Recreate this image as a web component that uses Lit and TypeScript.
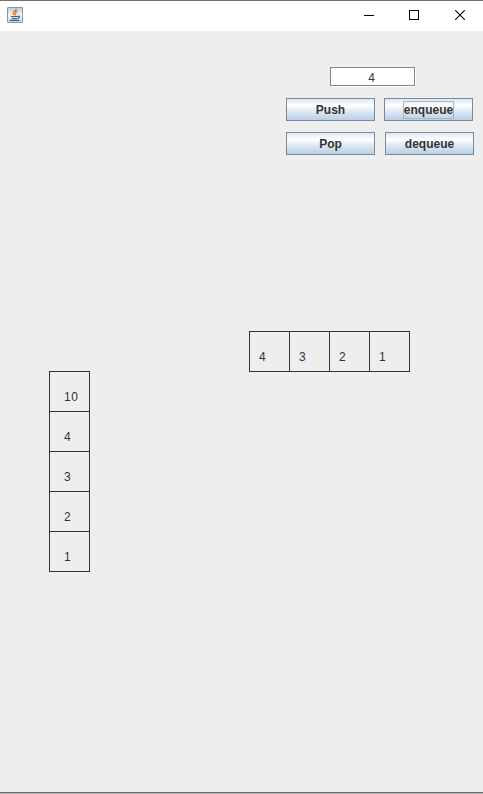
import { LitElement, html, css } from "lit";
import { customElement, property, state } from "lit/decorators.js";

@customElement("title-bar")
class TitleBar extends LitElement {
  static styles = css`
    :host { display: flex; box-sizing: border-box; height: 31px; border-top: 1px solid #707070; background: #fff; align-items: flex-start; }
    .logo { margin: 6px auto 0 7px; }
    .caption { width: 46px; height: 30px; display: flex; justify-content: center; }
    .caption svg { margin-top: 9px; }
    .caption.min { width: 45px; }
    svg { display: block; }
  `;
  render() {
    return html`
      <svg class="logo" width="16" height="16" viewBox="0 0 16 16" fill="none">
        <defs>
          <linearGradient id="g" x1="0" y1="0" x2="0" y2="1">
            <stop offset="0" stop-color="#b9cddb" />
            <stop offset=".5" stop-color="#f1f5f8" />
            <stop offset="1" stop-color="#c6d8e4" />
          </linearGradient>
        </defs>
        <rect x=".5" y=".5" width="15" height="15" rx=".5" fill="url(#g)" stroke="#8199ad" />
        <path d="M9.2 1.6C9.6 3.8 5.8 4.4 6.2 6.2c.2.8 1 1.2 1.2 2M10.6 4C8.4 4.8 8 5.6 8.7 6.6c.4.6.1 1.1-.5 1.6" stroke="#ee7f22" stroke-width="1.5" />
        <path d="M4 9.5h6.8M5 11.5h5.4M10.8 9.3c2-.5 2.3 1.1.2 1.9M2.8 13.4h9.6" stroke="#2d6090" stroke-width="1.2" />
      </svg>
      <div class="caption min">
        <svg width="10" height="10" viewBox="0 0 10 10"><path d="M0 5.5h10" stroke="#000" /></svg>
      </div>
      <div class="caption">
        <svg width="10" height="10" viewBox="0 0 10 10"><rect x=".5" y=".5" width="9" height="9" fill="none" stroke="#000" /></svg>
      </div>
      <div class="caption">
        <svg width="10" height="10" viewBox="0 0 10 10"><path d="M.2.2l9.6 9.6M9.8.2L.2 9.8" stroke="#000" stroke-width="1.1" /></svg>
      </div>
    `;
  }
}

@customElement("metal-button")
class MetalButton extends LitElement {
  @property() label = "";
  @property({ type: Boolean }) focused = false;
  static styles = css`
    :host { display: block; }
    button {
      display: flex; align-items: center; justify-content: center; box-sizing: border-box;
      width: 89px; height: 23px; padding: 0; margin: 0; border: 1px solid #7a8a99; border-radius: 0;
      background: linear-gradient(#dde8f3 0, #ffffff 30%, #dde8f3 60%, #b8cfe5 100%);
      font: bold 12px/16px "Liberation Sans", Arial, sans-serif; color: #333;
    }
    span { border: 1px solid transparent; height: 16px; }
    .focused { border-color: #a3b8cc; }
  `;
  render() {
    return html`<button><span class=${this.focused ? "focused" : ""}>${this.label}</span></button>`;
  }
}

@customElement("app-root")
class AppRoot extends LitElement {
  @state() stack = [10, 4, 3, 2, 1];
  @state() queue = [4, 3, 2, 1];
  static styles = css`
    :host {
      display: flex; flex-direction: column; box-sizing: border-box; height: 794px; width: 483px;
      background: #eee; color: #333; font: 12px/14px "Liberation Sans", Arial, sans-serif; overflow: hidden;
    }
    .controls { display: flex; flex-direction: column; margin: 36px 0 0 286px; }
    .field {
      box-sizing: border-box; width: 85px; height: 19px; margin-left: 44px; padding: 2px 2px 0 0; border: 1px solid #7a8a99;
      border-radius: 0; background: #fff; box-shadow: 1px 1px 0 #fff; text-align: center;
      font: 12px "Liberation Sans", Arial, sans-serif; color: #333; outline: none;
    }
    .row { display: flex; gap: 9px; margin-top: 12px; }
    .row + .row { gap: 10px; margin-top: 11px; }
    .board { display: flex; align-items: flex-start; margin: 176px 0 0 49px; }
    .stack { width: 41px; margin-top: 40px; }
    .queue { display: flex; margin-left: 159px; }
    .cell { box-sizing: border-box; width: 41px; height: 41px; border: 1px solid #333; padding: 18px 0 0 14px; letter-spacing: .6px; }
    .stack .cell + .cell { margin-top: -1px; }
    .queue .cell { padding-left: 9px; }
    .queue .cell + .cell { margin-left: -1px; }
    .edge { margin-top: auto; height: 2px; box-sizing: border-box; border-top: 1px solid #6b6b6b; background: #b4b4b4; }
  `;
  render() {
    return html`
      <title-bar></title-bar>
      <div class="controls">
        <input class="field" .value=${"4"} />
        <div class="row">
          <metal-button label="Push"></metal-button>
          <metal-button label="enqueue" focused></metal-button>
        </div>
        <div class="row">
          <metal-button label="Pop"></metal-button>
          <metal-button label="dequeue"></metal-button>
        </div>
      </div>
      <div class="board">
        <div class="stack">${this.stack.map((n) => html`<div class="cell">${n}</div>`)}</div>
        <div class="queue">${this.queue.map((n) => html`<div class="cell">${n}</div>`)}</div>
      </div>
      <div class="edge"></div>
    `;
  }
}
